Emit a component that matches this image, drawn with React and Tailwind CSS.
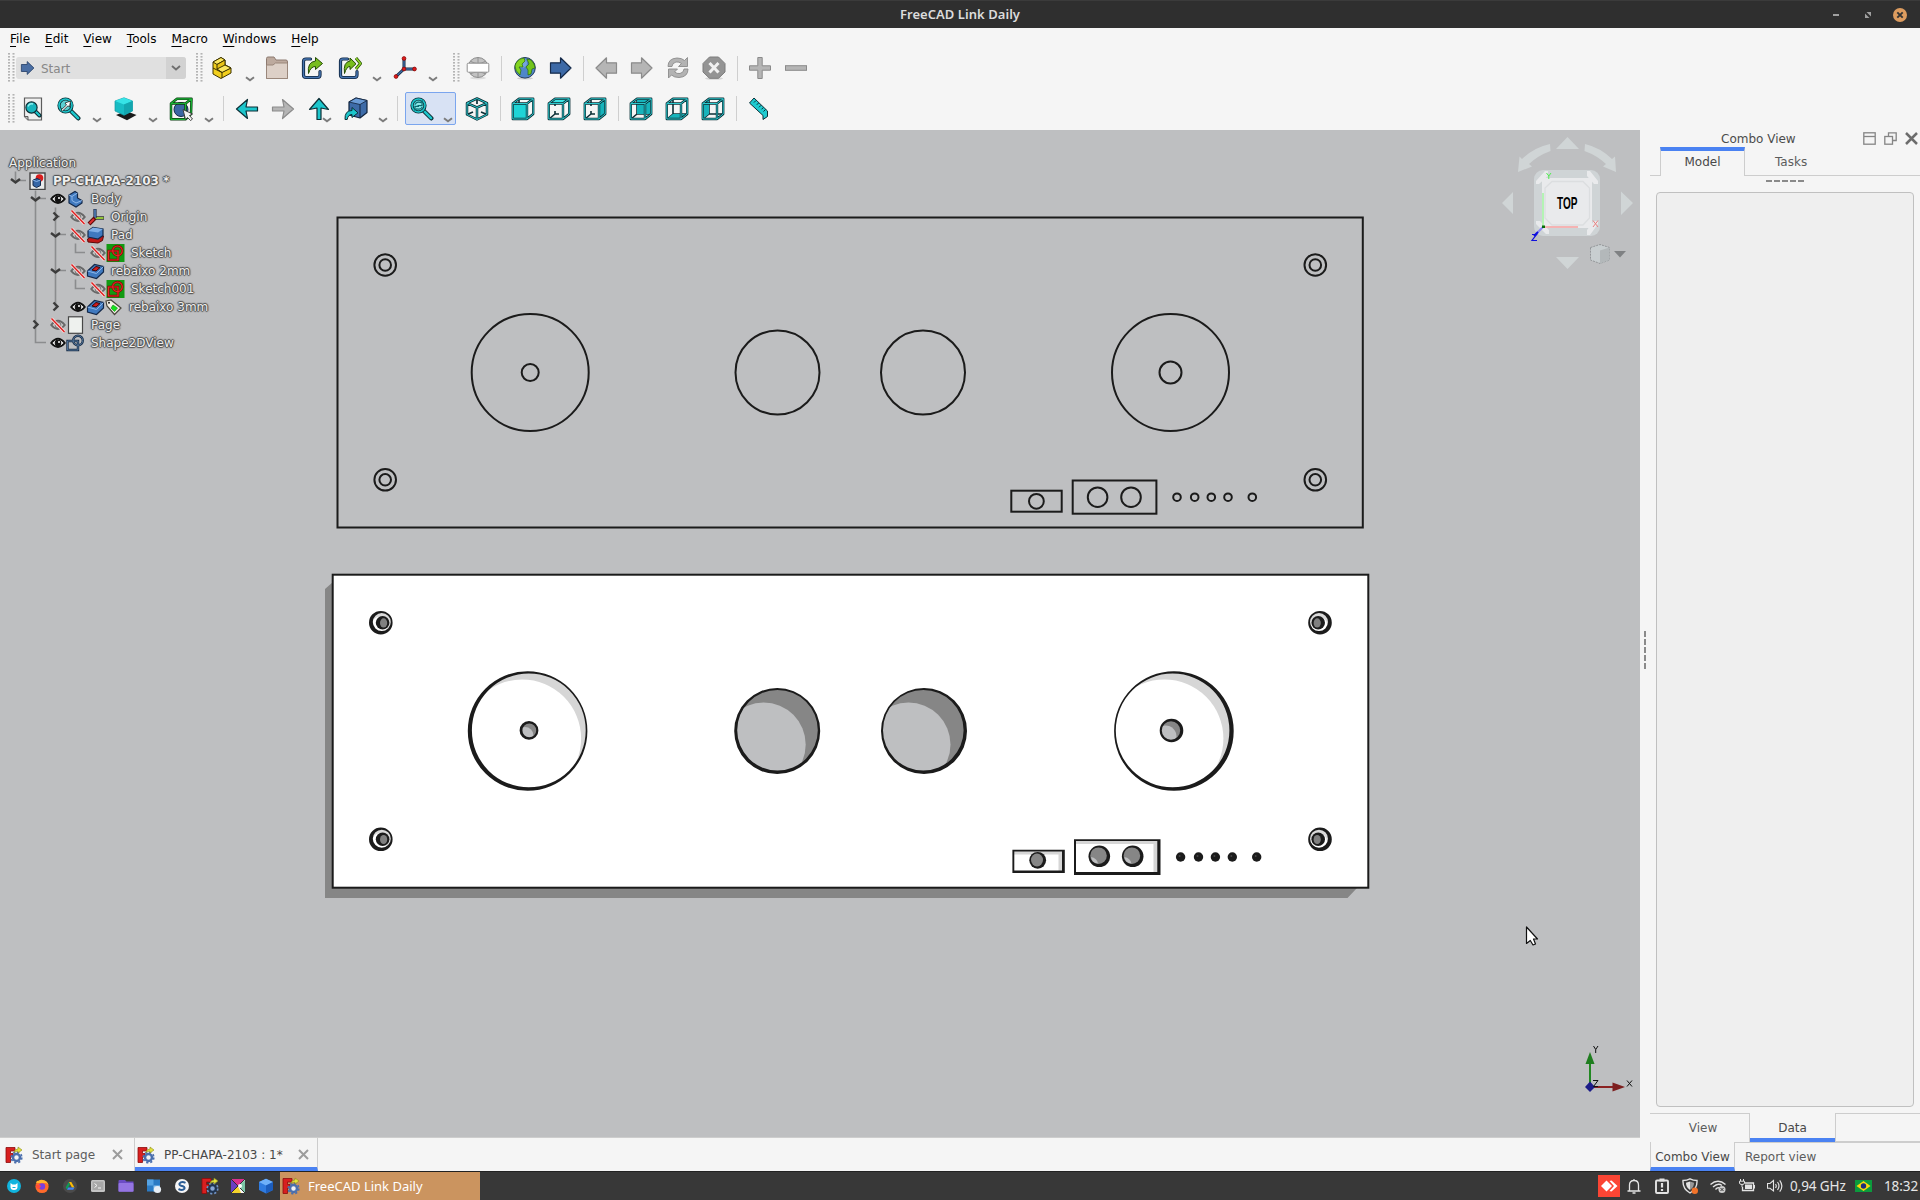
import React from "react";

const INK = "#0c2f36";
const TEAL = "#1cc6cc";
const LINE = "#1b1b1b";

const Svg = ({ s = 24, v = 24, children, className = "" }) => (
  <svg width={s} height={s} viewBox={`0 0 ${v} ${v}`} fill="none" className={"block shrink-0 " + className}>
    {children}
  </svg>
);

/* ---------- toolbar pieces ---------- */
const Grip = () => (
  <svg width="7" height="30" viewBox="0 0 7 30" className="block shrink-0">
    {[0, 4.5].map((x) =>
      [0, 3, 6, 9, 12, 15, 18, 21, 24, 27].map((y) => <rect key={x + "-" + y} x={x} y={y} width="2" height="1.6" fill="#b4b4b4" />)
    )}
  </svg>
);
const Cell = ({ children, className = "w-9" }) => <div className={"flex h-full shrink-0 items-center justify-center " + className}>{children}</div>;
const Chevron = ({ className = "w-[19px]" }) => (
  <div className={"flex h-full shrink-0 items-center justify-center pt-[22px] " + className}>
    <svg width="10" height="6" viewBox="0 0 10 6" fill="none"><path d="M1 1.2 L5 4.2 L9 1.2" stroke="#7c7c7c" strokeWidth="2" /></svg>
  </div>
);
const Sep = () => (
  <div className="flex h-full w-[10px] shrink-0 items-center justify-center"><div className="h-[25px] w-px bg-[#cfcfcf]" /></div>
);

const ArrowShape = ({ fill, stroke, dir = 0, thin }) => (
  <Svg>
    <g transform={`rotate(${dir} 12 12)`}>
      <path
        d={thin ? "M1.5 10 H13 L11.5 2.5 L22.5 12 L11.5 21.5 L13 14 H1.5 Z" : "M1.5 6.8 H11.5 V1.8 L22 12 L11.5 22.2 V17.2 H1.5 Z"}
        fill={fill} stroke={stroke} strokeWidth="1.2" strokeLinejoin="round"
      />
    </g>
  </Svg>
);

const PartIcon = () => (
  <Svg>
    <g stroke="#3d3300" strokeWidth="1" strokeLinejoin="round">
      <path d="M3 6 L11 1.5 L15 4 V9 L21 12 V17 L11 22.5 L3 18 Z" fill="#f2cf1d" />
      <path d="M3 6 L7 8.5 L15 4 L11 1.5 Z" fill="#fbe75e" />
      <path d="M7 8.5 V13 L12 16 L21 12 L15 9 V4 Z" fill="#e8c317" />
      <path d="M7 13 L15 9 L21 12 L12 16.5 Z" fill="#fbe75e" />
      <path d="M3 12 L12 16.5 V22" fill="none" />
    </g>
  </Svg>
);
const FolderIcon = () => (
  <Svg>
    <path d="M1.5 22.5 V2.5 Q1.5 1 3 1 H9 L11 4 H21 Q22.5 4 22.5 6 V22.5 Z" fill="#bdaa9e" stroke="#8d7a70" />
    <path d="M1.5 22.5 V9 H8 L10.5 7 H22.5 V22.5 Z" fill="#ddd0c7" stroke="#9a877b" />
  </Svg>
);
const LinkIcon = ({ double }) => (
  <Svg>
    <path d="M9.5 3 H5 Q2.5 3 2.5 5.500 V19 Q2.5 21.500 5 21.500 H16.500 Q19 21.500 19 19 V15.500" stroke="#0d2440" strokeWidth="3.2" strokeLinecap="round" />
    <path d="M9.5 3 H5 Q2.5 3 2.5 5.500 V19 Q2.5 21.500 5 21.500 H16.500 Q19 21.500 19 19 V15.500" stroke="#4674b0" strokeWidth="1.5" strokeLinecap="round" />
    <path d={double ? "M6.5 17.5 Q5 6 12 5 V2 L18 7.8 L12 13.5 V10.5 Q8.5 10.5 6.5 17.5 Z" : "M7.5 17.5 Q6 6 14.5 5 V1.5 L21.5 7.5 L14.5 13.5 V10.5 Q9.5 10.5 7.5 17.5 Z"} fill="#78bd1f" stroke="#254d05" strokeLinejoin="round" />
    {double && <path d="M18 2 L22.5 7.5 L18 13" stroke="#254d05" strokeWidth="3" />}
    {double && <path d="M18 2 L22.5 7.5 L18 13" stroke="#8ed42b" strokeWidth="1.6" />}
  </Svg>
);
const AxisIcon = () => (
  <Svg>
    <path d="M11 3 V13 H22 M11 13 L3 20.5" stroke="#12273f" strokeWidth="3" />
    <path d="M11 3 V13 H22 M11 13 L3 20.5" stroke="#3f6ea8" strokeWidth="1.4" />
    {[[11, 2.5], [11, 13], [21.5, 13], [3, 20.5]].map(([x, y]) => <circle key={x + "," + y} cx={x} cy={y} r="1.9" fill="#e01b1b" stroke="#7c0606" strokeWidth="0.7" />)}
  </Svg>
);
const GlobeGray = () => (
  <Svg>
    <ellipse cx="12" cy="22" rx="8" ry="1.5" fill="#dcdcdc" />
    <circle cx="12" cy="11.5" r="10" fill="#c2c2c2" stroke="#8d8d8d" />
    <path d="M12 1.5 V21.5 M4 5 Q12 10 20 5 M4 18 Q12 14 20 18" stroke="#8d8d8d" strokeWidth="0.9" />
    <rect x="1.2" y="7.2" width="21.6" height="9" rx="1" fill="#fff" stroke="#929292" />
  </Svg>
);
const Globe = () => (
  <Svg>
    <ellipse cx="12" cy="22.3" rx="8" ry="1.3" fill="#cfcfcf" />
    <circle cx="12" cy="11.8" r="10.3" fill="#4f86c9" stroke="#23395c" />
    <circle cx="9" cy="7" r="5" fill="#8fb8e8" opacity=".6" />
    <path d="M3 7 Q6 2 11 2 L12 5 L9 8 L10 11 L6 11 L8 14 L7 19 Q2 15 2 10 Z" fill="#83d422" stroke="#2c6a0c" strokeWidth=".7" />
    <path d="M14 3 L18 4 Q22 8 22 12 L19 13 L18 18 L15 19 L15 14 L13 11 L16 8 Z" fill="#72c41c" stroke="#2c6a0c" strokeWidth=".7" />
  </Svg>
);
const RefreshIcon = () => (
  <Svg>
    <g fill="#b3b3b3" stroke="#8b8b8b" strokeWidth=".9" strokeLinejoin="round">
      <path d="M2 10.5 Q2 2.5 11 2 Q16 2 18.5 4.5 L21.5 1.5 V10.5 H12.5 L15.5 7.5 Q13 5.5 10 6 Q6 7 6 10.5 Z" />
      <path d="M22 13 Q22 21 13 21.5 Q8 21.5 5.5 19 L2.5 22 V13 H11.5 L8.500 16 Q11 18 14 17.5 Q18 16.5 18 13 Z" />
    </g>
  </Svg>
);
const StopIcon = () => (
  <Svg>
    <ellipse cx="12" cy="22.5" rx="9" ry="1.3" fill="#d5d5d5" />
    <path d="M7.5 1 H16.5 L23 7.5 V16 L16.5 22.3 H7.5 L1 16 V7.5 Z" fill="#949494" stroke="#7d7d7d" />
    <path d="M7.5 7 L16.5 16.5 M16.5 7 L7.5 16.5" stroke="#f1f1f1" strokeWidth="3" />
  </Svg>
);
const PlusIcon = () => (
  <Svg><path d="M9.8 1.5 H14.2 V9.8 H22.5 V14.2 H14.2 V22.5 H9.8 V14.2 H1.5 V9.8 H9.8 Z" fill="#b5b5b5" stroke="#8a8a8a" /></Svg>
);
const MinusIcon = () => <Svg><rect x="1.5" y="9.7" width="21" height="4.6" fill="#b5b5b5" stroke="#8a8a8a" /></Svg>;

const Lens = ({ x = 8.5, y = 8.5, r = 6.5, children }) => (
  <g>
    <path d={`M${x + r * 0.8} ${y + r * 0.8} L21.3 21.3`} stroke={INK} strokeWidth="4.4" strokeLinecap="round" />
    <path d={`M${x + r * 0.9} ${y + r * 0.9} L21.1 21.1`} stroke={TEAL} strokeWidth="2.5" strokeLinecap="round" />
    <circle cx={x} cy={y} r={r} fill="#5ccfd2" stroke={INK} strokeWidth="3.2" />
    <circle cx={x} cy={y} r={r} stroke={TEAL} strokeWidth="1.6" />
    {children}
  </g>
);
const FitAllIcon = () => (
  <Svg>
    <path d="M3.5 1 H20.5 V23 H7 L3.5 19.5 Z" fill="#f0f0f0" stroke="#5b5b5b" strokeWidth="1.2" />
    <path d="M3.5 19.5 H7 V23" fill="#bbb" stroke="#5b5b5b" />
    <path d="M14 14 L18.5 18.5" stroke={INK} strokeWidth="4" strokeLinecap="round" />
    <path d="M14 14 L18.3 18.3" stroke={TEAL} strokeWidth="2" strokeLinecap="round" />
    <circle cx="10.5" cy="10.5" r="5.6" fill="#19b5bd" stroke={INK} strokeWidth="1.2" />
    <path d="M7 9.5 Q8.5 6 12 7" stroke="#8df0f0" strokeWidth="1.4" />
  </Svg>
);
const FitSelIcon = () => (
  <Svg><Lens><path d="M4 13 L9.500 8 L8 6 L13.500 4 L12.500 10 L11 8.800 L5.500 14 Z" fill="#fff" stroke="#222" strokeWidth=".8" /></Lens></Svg>
);
const SyncIcon = () => (
  <Svg><Lens><path d="M5 7.500 Q6.500 4.200 10.500 5.500 L12 4 V8.500 H7.500 M12.300 10 Q10.500 13 6.800 11.800 L5 13 V9.500 H9" stroke="#0b6a70" strokeWidth="1.2" fill="#8ce8e8" /></Lens></Svg>
);
const DrawStyleIcon = () => (
  <Svg>
    <path d="M3 18 L13 14 L23.5 18 L14 23.2 Z" fill="#1a1a1a" />
    <path d="M2 4 L11 0.8 L19.5 4 V14 L11 18.3 L2 14 Z" fill="#18bcc4" stroke="#159aa2" strokeWidth=".7" />
    <path d="M2 4 L11 0.8 L19.5 4 L11 7.5 Z" fill="#36e3e6" />
    <path d="M11 7.5 L19.5 4 V14 L11 18.3 Z" fill="#13a6af" />
  </Svg>
);
const BoxSelIcon = () => (
  <Svg>
    <circle cx="12" cy="12.500" r="7" fill="#3a66a3" stroke="#142a4a" />
    <path d="M2 6.500 L8 1.800 H22.5 L22 17 L16.500 22.300 H2 Z M2 6.500 H16.5 V22 M16.5 6.500 L22.5 1.800" stroke="#0a3a10" strokeWidth="2.500" strokeLinejoin="round" />
    <path d="M2 6.500 L8 1.800 H22.5 L22 17 L16.500 22.300 H2 Z M2 6.500 H16.5 V22 M16.5 6.500 L22.5 1.800" stroke="#19b335" strokeWidth="1.2" strokeLinejoin="round" />
    <path d="M14 12.500 L23.5 17 L20.5 18.5 L23.5 22 L21.5 23.5 L18.5 20.5 L16.5 22.5 Z" fill="#f2f2f2" stroke="#333" strokeWidth=".9" />
  </Svg>
);
const LinkNavIcon = () => (
  <Svg>
    <path d="M5 5 L12 1 L23 3.5 V15.5 L16 21 L5 18 Z" fill="#3d6ba8" stroke="#11233c" strokeWidth="1.2" strokeLinejoin="round" />
    <path d="M5 5 L16 7.500 L23 3.5 L12 1 Z" fill="#6a9bd6" stroke="#11233c" strokeWidth=".8" />
    <path d="M16 7.5 V21" stroke="#11233c" />
    <path d="M1 22.5 Q.5 13.5 8 13.5 V10.5 L14 15.8 L8 20.5 V17.5 Q4 17.5 3.2 22.5 Z" fill={TEAL} stroke={INK} strokeLinejoin="round" />
  </Svg>
);
const FACES = {
  front: "M1.8 6.5 H16 V22 H1.8 Z",
  top: "M1.8 6.5 L8 1.8 H22.2 L16 6.5 Z",
  right: "M16 6.5 L22.2 1.8 V17 L16 22 Z",
  rear: "M8 1.8 H22.2 V17 H8 Z",
  bottom: "M1.8 22 L8 17 H22.2 L16 22 Z",
  left: "M1.8 6.5 L8 1.8 V17 L1.8 22 Z",
};
const CubeIcon = ({ face }) => {
  const back = "M8 2 V9 M8 14 V17 L2 22 M8 17 H12";
  const hidden = "M8 2 V17 M8 17 L2 22 M8 17 H22";
  const front = "M1.8 6.5 H16 V22 H1.8 Z M1.8 6.5 L8 1.8 H22.2 L16 6.5 M22.2 1.8 V17 L16 22";
  const isBehind = face === "rear" || face === "bottom" || face === "left";
  return (
    <Svg>
      <path d={isBehind ? hidden : back} stroke={INK} strokeWidth="1.600" />
      <path d={FACES[face]} fill={face === "top" ? "#3be4e4" : face === "front" ? "#1fd4d6" : "#17b3bb"} />
      <path d={front} stroke={INK} strokeWidth="2.400" strokeLinejoin="round" />
      <path d={front} stroke="#2cc9ce" strokeWidth="1" strokeLinejoin="round" />
    </Svg>
  );
};
const IsoIcon = () => {
  const d = "M12 1.5 L22 6.2 V17.5 L12 22.5 L2 17.5 V6.2 Z M2 6.2 L12 10.5 L22 6.2 M12 10.5 V22.5";
  return (
    <Svg>
      <path d="M12 2 V7 M2 17.5 L8 15 M22 17.5 L16 15" stroke={INK} strokeWidth="1.700" />
      <path d={d} stroke={INK} strokeWidth="2.500" strokeLinejoin="round" />
      <path d={d} stroke="#2cc9ce" strokeWidth="1" strokeLinejoin="round" />
    </Svg>
  );
};
const RulerIcon = () => (
  <Svg>
    <path d="M2.5 6 L7 1 L20.5 14 V19.5 L16 22.5 V18.5 Z" fill="#1fcbd0" stroke={INK} strokeWidth="1" strokeLinejoin="round" />
    <path d="M9 3.5 L7 5.5 M11.5 6 L9.8 7.8 M14 8.3 L12 10.3 M16.3 10.5 L14.6 12.3 M18.5 12.5 L16.5 14.5" stroke={INK} strokeWidth="1" />
  </Svg>
);

const Menu = ({ t }) => <div><span className="underline decoration-1 underline-offset-[3px]">{t[0]}</span>{t.slice(1)}</div>;

/* ---------- model tree ---------- */
const Eye = ({ off }) => (
  <svg width="16" height="16" viewBox="0 0 16 16" fill="none" className="shrink-0">
    <path d="M1.2 8 Q8 -0.5 14.8 8 Q8 16 1.2 8 Z" fill={off ? "#c9c9c9" : "#fff"} stroke={off ? "#686868" : "#111"} strokeWidth="1.9" />
    <circle cx="8" cy="8" r="2.9" fill={off ? "#bcbcbc" : "#111"} stroke={off ? "#777" : "#111"} />
    {!off && <circle cx="9" cy="7" r="1" fill="#fff" />}
    {off && <path d="M1.5 1.500 L14.5 15" stroke="#f6dede" strokeWidth="3.200" />}
    {off && <path d="M1.5 1.500 L14.5 15" stroke="#e01f1f" strokeWidth="1.4" />}
  </svg>
);
const T = ({ children }) => <svg width="19" height="18" viewBox="0 0 19 18" fill="none" className="shrink-0">{children}</svg>;
const treeIcons = {
  doc: <T><rect x="2" y="1" width="15" height="16.5" fill="#e9ebeb" stroke="#444" strokeWidth="1.4" /><circle cx="11.5" cy="6" r="3.8" fill="#d81d1d" /><path d="M5 8 L9 6.5 L12.5 8 V13.5 L8.5 15.5 L5 13.5 Z" fill="#3566a6" stroke="#14294a" /><path d="M5 8 L8.5 9.5 L12.5 8" stroke="#8db6e8" /></T>,
  body: <T><path d="M3 5 L9 1.5 L11.5 3 V8 L16 10.5 V13 L10 17 L3 13 Z" fill="#3f79bf" stroke="#14294a" strokeWidth="1.2" /><path d="M3 5 L6 6.5 L11.5 3 M6 6.5 V10.5 L10 13 L16 10.5" stroke="#8db6e8" /></T>,
  origin: <T><path d="M9 10 H18" stroke="#333" strokeWidth="3.5" /><path d="M9 10 H17.500" stroke="#9ed43c" strokeWidth="1.8" /><path d="M9 10 V1" stroke="#1b2b45" strokeWidth="3.2" /><path d="M9 10 V1.500" stroke="#5b8cca" strokeWidth="1.4" /><path d="M9 10 L3 16" stroke="#5a0909" strokeWidth="4" /><path d="M8 11 L3.5 15.5" stroke="#e03030" strokeWidth="2" /></T>,
  pad: <T><path d="M1.5 13 L6 10 H17.5 L16.500 14.500 L12 17 L2 16 Z" fill="#c01818" stroke="#5a0909" /><path d="M2 5 L7 1.5 L17 3 V9.5 L12 13 L2 11 Z" fill="#3f79bf" stroke="#14294a" strokeWidth="1.2" /><path d="M2 5 L7 1.5 L17 3 L12 6.5 Z" fill="#7eaee6" /></T>,
  sketch: <T><rect x=".5" y="0" width="18" height="18" fill="#129a12" /><path d="M2.500 7 H12 V16 H2.500 Z" stroke="#7a0707" strokeWidth="2.4" /><circle cx="11.5" cy="6.8" r="4.8" stroke="#7a0707" strokeWidth="2.4" /><path d="M2.500 7 H12 V16 H2.500 Z" stroke="#e82626" strokeWidth="1.2" /><circle cx="11.5" cy="6.8" r="4.8" stroke="#e82626" strokeWidth="1.2" /></T>,
  pocket: <T><path d="M1.5 9 L8.5 2.5 L17.5 4.5 V10 L10.5 16.5 L1.5 14 Z" fill="#3f79bf" stroke="#14294a" strokeWidth="1.2" /><path d="M1.5 9 L10.5 11.5 L17.5 4.5" stroke="#8db6e8" /><path d="M6 8 L10 4.5 L14 5.5 L10 9 Z" fill="#d31b1b" stroke="#3c0606" /></T>,
  page: <T><rect x="2.5" y=".8" width="14" height="16.5" fill="#eef1ee" stroke="#474747" strokeWidth="1.2" /></T>,
  shape: <T><path d="M1.5 7 H12 V16 H1.5 Z" stroke="#1a2e48" strokeWidth="2.4" /><circle cx="12" cy="6.5" r="4.8" stroke="#1a2e48" strokeWidth="2.4" /><path d="M1.5 7 H12 V16 H1.5 Z" stroke="#56799f" strokeWidth=".9" /><circle cx="12" cy="6.5" r="4.8" stroke="#56799f" strokeWidth=".9" /></T>,
};
const TagIcon = () => <T><path d="M2 3 L7 2 L17 10 L10.5 16.5 L3 8 Z" fill="#f3f0e6" stroke="#4a463c" strokeWidth="1.2" /><path d="M9 7 L13.5 10 L10.5 13.5 L7 10 Z" fill="#14e31c" stroke="#0a8a10" strokeWidth=".6" /><circle cx="5" cy="4.8" r="1" fill="#222" /></T>;

const ROWS = [
  { pad: "pl-[50px]", icon: "body", eye: "on", t: "Body" },
  { pad: "pl-[70px]", icon: "origin", eye: "off", t: "Origin" },
  { pad: "pl-[70px]", icon: "pad", eye: "off", t: "Pad" },
  { pad: "pl-[90px]", icon: "sketch", eye: "off", t: "Sketch" },
  { pad: "pl-[70px]", icon: "pocket", eye: "off", t: "rebaixo 2mm" },
  { pad: "pl-[90px]", icon: "sketch", eye: "off", t: "Sketch001" },
  { pad: "pl-[70px]", icon: "pocket", eye: "on", t: "rebaixo 3mm", tag: true },
  { pad: "pl-[50px]", icon: "page", eye: "off", t: "Page" },
  { pad: "pl-[50px]", icon: "shape", eye: "on", t: "Shape2DView" },
];
const glow = "[text-shadow:0_0_1px_#444,0_0_2px_#555,1px_0_1px_#555,-1px_0_1px_#555,0_1px_1px_#555,0_-1px_1px_#555]";

const Tree = () => (
  <div className={"absolute left-0 top-[24px] w-[230px] text-[12px] leading-[18px] text-[#eeeeee] " + glow}>
    <svg className="absolute left-0 top-0" width="90" height="198" viewBox="0 153.5 90 198" fill="none">
      <path d="M15.5 171 V180 H26 M35.5 190 V342 H46 M35.5 198 H46 M55.5 207 V306 M75.5 243 V252 H85 M75.5 279 V288 H85 M55.5 216 H60 M55.5 234 H66 M55.5 270 H66" stroke="#8b8c8e" strokeWidth="1.6" />
      {[[15.5, 180], [35.5, 198], [55.5, 234], [55.5, 270]].map(([x, y]) => <path key={x + "" + y} d={`M${x - 4.5} ${y - 1.5} L${x} ${y + 2} L${x + 4.5} ${y - 1.5}`} stroke="#3c3c3c" strokeWidth="2.4" />)}
      {[[55.5, 216], [55.5, 306], [35.5, 324]].map(([x, y]) => <path key={x + "" + y} d={`M${x - 2} ${y - 4} L${x + 2} ${y} L${x - 2} ${y + 4}`} stroke="#3c3c3c" strokeWidth="2.4" />)}
    </svg>
    <div className="relative h-[18px] pl-[9px]">Application</div>
    <div className="relative flex h-[18px] items-center pl-[28px] font-bold">{treeIcons.doc}<span className="pl-[6px]">PP-CHAPA-2103 *</span></div>
    {ROWS.map((r) => (
      <div key={r.t} className={"relative flex h-[18px] items-center whitespace-nowrap " + r.pad}>
        <Eye off={r.eye === "off"} /><span>{treeIcons[r.icon]}</span>{r.tag && <span className="-ml-[1px]"><TagIcon /></span>}
        <span className={r.tag ? "pl-[6px]" : "pl-[6px]"}>{r.t}</span>
      </div>
    ))}
  </div>
);

/* ---------- 3D scene ---------- */
const Crescent = ({ id, cx, cy, r, dx, dy, r2, back, fore }) => (
  <g>
    <clipPath id={id}><circle cx={cx} cy={cy} r={r} /></clipPath>
    <circle cx={cx} cy={cy} r={r} fill={back} />
    <circle cx={cx + dx} cy={cy + dy} r={r2} fill={fore} clipPath={`url(#${id})`} />
  </g>
);
const Rim = ({ cx, cy, r, dx = 0, dy = 0, w = 2 }) => (
  <path
    fillRule="evenodd" fill={LINE}
    d={`M${cx - r - 1} ${cy} a${r + 1} ${r + 1} 0 1 0 ${2 * r + 2} 0 a${r + 1} ${r + 1} 0 1 0 ${-2 * r - 2} 0 Z M${cx + dx - (r + 1 - w)} ${cy + dy} a${r + 1 - w} ${r + 1 - w} 0 1 0 ${2 * (r + 1 - w)} 0 a${r + 1 - w} ${r + 1 - w} 0 1 0 ${-2 * (r + 1 - w)} 0 Z`}
  />
);

const Scene = () => (
  <svg width="1640" height="1007" viewBox="0 130 1640 1007" fill="none" className="block">
    <g stroke={LINE} strokeWidth="2">
      <rect x="337.5" y="217.5" width="1025.3" height="310" />
      {[[385.200, 265], [1315.3, 265], [385.200, 479.8], [1315.3, 479.8]].map(([x, y]) => <g key={x + "-" + y}><circle cx={x} cy={y} r="10.8" /><circle cx={x} cy={y} r="5.8" /></g>)}
      <circle cx="530.200" cy="372.5" r="58.5" /><circle cx="530.200" cy="372.5" r="8.5" />
      <circle cx="777.5" cy="372.5" r="42" /><circle cx="923" cy="372.5" r="42" />
      <circle cx="1170.5" cy="372.5" r="58.5" /><circle cx="1170.5" cy="372.5" r="11" />
      <rect x="1011.3" y="490.7" width="50.4" height="21" /><circle cx="1036.4" cy="501.3" r="7.4" />
      <rect x="1072.7" y="480.5" width="83.700" height="33.2" /><circle cx="1097.6" cy="497.2" r="9.8" /><circle cx="1131" cy="497.2" r="9.8" />
      {[1177, 1194.7, 1211.3, 1228, 1252.3].map((x) => <circle key={x} cx={x} cy="497.2" r="3.8" />)}
    </g>

    <path d="M333 582 L325 589 V898 H1347.5 L1357 888 V700 H333 Z" fill="#868686" />
    <rect x="332.7" y="574.7" width="1035.6" height="313" fill="#fff" stroke={LINE} strokeWidth="2" />
    {[[380.8, 622.7, 1], [380.8, 839.3, 1], [1320, 622.7, -1], [1320, 839.3, -1]].map(([x, y, d]) => (
      <g key={x + "-" + y}>
        <circle cx={x} cy={y} r="10.8" fill="#dadada" /><circle cx={x - 1} cy={y + 2} r="8" fill="#fff" />
        <Rim cx={x} cy={y} r={10.8} w={2.8} dx={d * 1} dy={-0.6} />
        <circle cx={x + d * 1.8} cy={y} r="6.8" fill={LINE} /><ellipse cx={x + d * 2.8} cy={y + 0.2} rx="3.6" ry="4.6" fill="#808080" />
      </g>
    ))}
    <Crescent id="c1" cx={527.6} cy={731} r={59} dx={-5.5} dy={7.5} r2={59} back="#d6d6d6" fore="#fff" />
    <Rim cx={527.6} cy={731} r={58.8} w={2.9} dx={1.2} dy={-0.6} />
    <Crescent id="c2" cx={529} cy={730.4} r={8.5} dx={-4} dy={5} r2={8.5} back="#868686" fore="#bebfc1" />
    <Rim cx={529} cy={730.4} r={8.4} w={2.5} dx={0.3} />
    <Crescent id="c3" cx={777.2} cy={731} r={42} dx={-13.5} dy={13.5} r2={42} back="#868686" fore="#bebfc1" />
    <Rim cx={777.2} cy={731} r={42} w={2.7} dx={0.3} dy={-0.8} />
    <Crescent id="c4" cx={924} cy={731} r={42} dx={-15.5} dy={13.5} r2={42} back="#868686" fore="#bebfc1" />
    <Rim cx={924} cy={731} r={42} w={2.7} dx={-0.7} dy={-0.8} />
    <Crescent id="c5" cx={1173.9} cy={731} r={59} dx={-9.5} dy={7.5} r2={59} back="#d6d6d6" fore="#fff" />
    <Rim cx={1173.9} cy={731} r={58.8} w={3} dx={-1.3} dy={-0.6} />
    <Crescent id="c6" cx={1171.5} cy={730.5} r={11} dx={-6} dy={6} r2={11} back="#868686" fore="#bebfc1" />
    <Rim cx={1171.5} cy={730.5} r={10.8} w={2.6} dx={-0.5} />

    <rect x="1013" y="850.5" width="51" height="21.5" fill="#fff" />
    <path d="M1014 851 H1063 V871 H1058.5 V854.5 H1014 Z" fill="#d6d6d6" />
    <path fillRule="evenodd" fill={LINE} d="M1012.4 849.7 H1064.8 V873 H1012.4 Z M1014.3 851.4 V870.6 H1062 V851.4 Z" />
    <circle cx="1037.7" cy="860.3" r="8.4" fill={LINE} /><ellipse cx="1037" cy="860" rx="6" ry="6.4" fill="#868686" />
    <rect x="1075" y="840" width="85" height="34" fill="#fff" />
    <path d="M1075 840 H1158 V872 H1153.5 V844 H1075 Z" fill="#d6d6d6" />
    <path fillRule="evenodd" fill={LINE} d="M1074 839.2 H1160.5 V875 H1074 Z M1076 841 V872 H1157.3 V841 Z" />
    {[1099.3, 1132.7].map((x) => (
      <g key={x}><circle cx={x} cy="856.3" r="10.8" fill={LINE} /><circle cx={x - 0.8} cy="855.7" r="8.3" fill="#868686" /><path d={`M${x - 8.3} 857 q6 1 7 6.500 q-6 -.5 -7 -6.500`} fill="#bebfc1" /></g>
    ))}
    {[1180.6, 1198.5, 1215.4, 1232.3, 1256.7].map((x) => <g key={x}><circle cx={x} cy="857" r="4.7" fill={LINE} /><circle cx={x - 1} cy="856" r="1" fill="#444" /></g>)}

    {/* navigation cube */}
    <g fill="#d0d5d6">
      <path d="M1567.5 137 L1579 149 H1556 Z M1567.5 269 L1579 257 H1556 Z M1502 203 L1513 192 V214 Z M1633 203 L1621 191.5 V215 Z" />
      <path d="M1550 144 L1550.5 151 Q1538 155.5 1529 164 L1532 166.5 L1518 172 L1519.5 156.5 L1522 159 Q1534 147.5 1550 144 Z" />
      <path d="M1585 144 L1584.5 151 Q1597 155.5 1606 164 L1603 166.5 L1616 172 L1615 156.5 L1612 159 Q1600 147.5 1585 144 Z" />
      <rect x="1534" y="170" width="66" height="66" rx="9" fill="#cfd4d6" />
    </g>
    <path d="M1536 181 L1545 171 H1548 V176 L1539 184 H1536 Z M1598 181 L1590 171 H1587 V176 L1594 184 H1598 Z M1536 224 L1546 234 H1549 V230 L1540 221 H1536 Z M1598 224 L1590 235 H1587 V230 L1594 221 H1598 Z" fill="#e9eaec" />
    <rect x="1542" y="178" width="50" height="50" rx="2" fill="#e9eaec" />
    <path d="M1552 181.5 H1583 L1589.5 188 V218 L1583 225 H1552 L1545 218 V188 Z" stroke="#dcdee0" strokeWidth="1.3" />
    <path d="M1543 193 V227" stroke="#b4f3b4" strokeWidth="2" /><path d="M1544 227 H1578" stroke="#f5b3b3" strokeWidth="2" />
    <path d="M1543 227 L1535 235" stroke="#8888f2" strokeWidth="2" /><path d="M1538 232 L1534 236" stroke="#1010dd" strokeWidth="2" />
    <rect x="1542" y="225.500" width="3" height="2.500" fill="#066b0c" />
    <path d="M1546.500 173 L1548.800 176 L1551 173 M1548.800 176 V179" stroke="#4fee4f" />
    <path d="M1593 220.500 L1598 227 M1598 220.500 L1593 227" stroke="#ea8080" />
    <path d="M1532 234.500 H1536.500 L1532 240.500 H1537" stroke="#1010dd" strokeWidth="1.2" />
    <text x="1557" y="209" textLength="20.500" lengthAdjust="spacingAndGlyphs" fontFamily="Liberation Sans" fontWeight="700" fontSize="16.500" fill="#000">TOP</text>
    <path d="M1590.500 247.500 L1600 244.500 L1609.500 247.500 V260 L1600 263.500 L1590.500 260 Z" fill="#c8ced0" stroke="#8d9193" strokeWidth=".9" strokeDasharray="2 1" />
    <path d="M1600 250.500 L1609.500 247.500 V260 L1600 263.500 Z" fill="#b3b8ba" />
    <path d="M1614 251 H1626 L1620 257.500 Z" fill="#7f8183" />

    {/* axis cross */}
    <path d="M1590 1087 V1062" stroke="#228822" strokeWidth="2" /><path d="M1590 1052 L1594.500 1064 H1585.500 Z" fill="#1f7d1f" />
    <path d="M1590 1087 H1614" stroke="#8b2222" strokeWidth="2" /><path d="M1625 1087 L1612.500 1082.500 V1091.500 Z" fill="#7d1f1f" />
    <path d="M1590 1081.500 L1595 1087 L1590 1092 L1585 1087 Z" fill="#1c1c88" />
    <path d="M1593.500 1046 L1595.700 1049.500 L1598 1046 M1595.700 1049.500 V1053 M1593 1080.500 H1598 L1593.500 1086.500 H1598 M1627 1080.500 L1632 1086.500 M1632 1080.500 L1627 1086.500" stroke="#111" />
    {/* pointer */}
    <path d="M1526.500 927 V943.500 L1530.300 940.500 L1533 945 L1535.500 944 L1533.500 939 H1537.500 Z" fill="#fff" stroke="#111" strokeWidth="1.200" strokeLinejoin="round" />
  </svg>
);

/* ---------- application logos ---------- */
const FreeCad = ({ dark }) => (
  <Svg s={18} v={18}>
    <path d="M1 1.500 H10 V5 H5.500 V7.500 H8 V11 H5.500 V16.500 H1 Z" fill="#d81f1f" stroke="#8c0c0c" strokeWidth=".8" />
    <circle cx="11.500" cy="11.500" r="3.500" stroke={dark ? "#1f3350" : "#4a6fae"} strokeWidth="2.500" fill={dark ? "#88a6d4" : "#f2f2f2"} />
    <circle cx="11.500" cy="11.500" r="5.300" stroke={dark ? "#6f93c8" : "#4a6fae"} strokeWidth="1.600" strokeDasharray="2.160 2" />
    <path d="M9 6.500 Q9.500 3 13 3 V1 L17 4 L13 7 V5.200 Q11 5 9 6.500 Z" fill="#e3e23c" stroke="#8a8a1c" strokeWidth=".6" />
  </Svg>
);
const TabClose = () => <svg width="11" height="11" viewBox="0 0 11 11"><path d="M1 1 L10 10 M10 1 L1 10" stroke="#9c9c9c" strokeWidth="2" /></svg>;

const S = ({ children }) => <div className="flex w-7 shrink-0 items-center justify-center"><Svg s={16} v={16}>{children}</Svg></div>;
const Launchers = () => (
  <>
    <S><circle cx="8" cy="8" r="7" fill="#11b4de" /><path d="M4.500 5 L6.500 6.500 H9.500 L11.500 5 V9 Q11.500 12 8 12 Q4.500 12 4.500 9 Z" fill="#fff" /><path d="M6.500 9.500 H9.500" stroke="#11b4de" /></S>
    <S><circle cx="8" cy="8.500" r="6.600" fill="#ff6a2b" /><path d="M2 5 Q3 2 4 3 Q7 1 9 2 Q14 3 14.600 8 Q14 5 11 5 Z" fill="#ffb52e" /><circle cx="8" cy="8.500" r="3.200" fill="#7a3fe0" /><path d="M2 7 Q5 6 7 8 L5 11 Q2 11 2 7 Z" fill="#ff4b3a" /></S>
    <S><circle cx="8" cy="8" r="7" fill="#4a4a4a" /><path d="M6.800 4 H9.300 L12.500 9.500 H10 Z" fill="#fbbc05" /><path d="M6.800 4 L8 6.200 L5 11.500 L3.600 9.500 Z" fill="#0f9d58" /><path d="M6.200 9.500 H12.500 L11.200 11.700 H5 Z" fill="#4285f4" /></S>
    <S><rect x="1" y="2" width="14" height="12" rx="1.500" fill="#c4c4c4" /><rect x="2.500" y="3.500" width="11" height="8.500" fill="#a8a8a8" /><path d="M4.500 5.500 L7 7.500 L4.500 9.500 M8 10 H11" stroke="#f4f4f4" /></S>
    <S><path d="M0.500 3 Q.5 2 1.500 2 H7 L8.500 3.500 H15.500 V13.500 H.5 Z" fill="#6b4cc4" /><rect x=".5" y="5" width="15" height="8.700" rx="1" fill="#9575e2" /></S>
    <S><rect x="1" y="1.500" width="13" height="12" fill="#2b7bc4" /><rect x="1" y="1.500" width="6.500" height="6" fill="#56a3e3" /><rect x="7.500" y="7.500" width="6.500" height="6" fill="#8dc3ee" /><circle cx="11.500" cy="11.500" r="3.600" fill="#e8eef5" /></S>
    <S><circle cx="8" cy="8" r="7" fill="#f6f6f6" /><path d="M11.500 4.800 Q7.500 2.800 5.500 5.500 Q5 7.500 8 8 Q11 8.800 10.500 10.600 Q8.500 13.200 4.500 11" stroke="#2c5d94" strokeWidth="2" /></S>
    <div className="flex w-7 shrink-0 items-center justify-center"><FreeCad dark /></div>
    <S><rect x="1" y="1" width="14" height="14" fill="#f8f8f8" /><path d="M1 1 H15 L8 8 Z" fill="#d9308c" /><path d="M1 1 L8 8 L1 15 Z" fill="#6a3fc2" /><path d="M1 15 L8 8 L11 15 Z" fill="#f4d22c" /><path d="M15 2 L8 8 L15 15 Z" fill="#7cc6a8" /><path d="M1 1 L15 15 M15 1 L1 15" stroke="#222" strokeWidth=".9" /><circle cx="10" cy="8" r="2" fill="#fff" /></S>
    <S><path d="M8 .8 L15 4 V12 L8 15.500 L1 12 V4 Z" fill="#2f7be0" /><path d="M8 .8 L15 4 L8 7.500 L1 4 Z" fill="#6eb0fa" /><path d="M8 7.500 L15 4 V12 L8 15.500 Z" fill="#1c5dbd" /></S>
  </>
);

const G = "#e3e3e3";
const Tray = () => (
  <div className="ml-auto flex h-full items-center text-[13.5px] tracking-[-0.1px] text-[#e6e6e6]">
    <div className="flex h-[22px] w-[22px] items-center justify-center bg-[#fb4534]">
      <svg width="17" height="12" viewBox="0 0 17 12"><path d="M0 6 L5.500 .5 L11 6 L5.500 11.500 Z" fill="#fff" /><path d="M8.500 1 L10.500 .5 L16.500 6 L10.500 11.500 L8.500 11 L13 6 Z" fill="#fff" /></svg>
    </div>
    <S><path d="M1.500 13 H14.500 M3.500 12.500 V7 Q3.500 2.500 8 2.500 Q12.500 2.500 12.500 7 V12.500 M8 2.500 V1 M6.500 15 H9.500" stroke={G} strokeWidth="1.300" /></S>
    <S><rect x="2" y="2.500" width="12" height="12.500" rx="1" stroke={G} strokeWidth="1.900" /><rect x="5.500" y=".5" width="5" height="3" fill={G} /><path d="M8 5 V9.500 M8 11 V13" stroke={G} strokeWidth="2.200" /></S>
    <S><path d="M1 2.500 Q5 2.500 8 .8 Q11 2.500 15 2.500 Q15.500 11 8 15 Q.5 11 1 2.500 Z" stroke={G} strokeWidth="1.400" /><path d="M4 4.800 L8 3.500 V12 Q4 9.500 4 4.800 Z" fill={G} /><path d="M8 3.500 L12 4.800 Q12 9.500 8 12 Z" fill="#999" /><circle cx="12.800" cy="12.800" r="3.200" fill="#f37329" /></S>
    <S><path d="M.5 6.500 Q8 0 15.500 6.500 M3 9 Q8 4.500 12 7.500 M5.500 11.500 Q7.500 9.300 9 10" stroke={G} strokeWidth="1.400" /><circle cx="12" cy="11.500" r="3.500" fill="#cfcfcf" /><path d="M10.500 10 L13.500 13 M13.500 10 L10.500 13" stroke="#383838" /></S>
    <div className="w-[1px]" />
    <S><path d="M6 5 H14.500 V12.500 H3.500 V9" stroke={G} strokeWidth="1.300" /><rect x="6" y="6.500" width="7" height="4.500" fill={G} /><rect x="14.800" y="7" width="1.200" height="3.500" fill={G} /><path d="M1.500 1 V3 M4.500 1 V3 M.5 3.200 H5.500 V5 Q5.500 6.500 3 6.500 Q.5 6.500 .5 5 Z M3 6.500 V9" stroke={G} /></S>
    <S><path d="M.5 5.500 H3 L6.500 2.500 V13 L3 10.300 H.5 Z" stroke={G} strokeWidth="1.100" /><path d="M8.500 6 Q10 8 8.500 10 M10.500 4 Q13.500 8 10.500 12 M12.700 2.300 Q17 8 12.700 13.700" stroke={G} strokeWidth="1.200" /></S>
    <div className="w-[66px] whitespace-nowrap pl-[1px] pt-[1px]">0,94 GHz</div>
    <svg width="17" height="12" viewBox="0 0 17 12" className="mr-[12px]"><rect width="17" height="12" fill="#0b9a3d" /><path d="M8.500 1 L15.500 6 L8.500 11 L1.500 6 Z" fill="#f8d80e" /><circle cx="8.500" cy="6" r="2.700" fill="#1b2d7a" /></svg>
    <div className="w-[36px] whitespace-nowrap pt-[1px]">18:32</div>
  </div>
);

const UpArrow = () => (
  <div className="relative flex w-9 items-center justify-center">
    <ArrowShape thin fill={TEAL} stroke={INK} dir={-90} />
    <svg width="10" height="6" viewBox="0 0 10 6" fill="none" className="absolute left-[21px] top-[20px]"><path d="M1 1.200 L5 4.200 L9 1.200" stroke="#7c7c7c" strokeWidth="2" /></svg>
  </div>
);

export default function App() {
  return (
    <div className="flex h-[1200px] w-[1920px] flex-col overflow-hidden bg-[#f5f5f5] font-['DejaVu_Sans',sans-serif] text-[12px] text-black">
      <header className="grid h-7 shrink-0 grid-cols-3 items-center border-t border-[#3b3b3b] bg-[#2f2f2f]">
        <div />
        <div className="text-center font-['Noto_Sans',sans-serif] text-[13px] font-semibold tracking-[0.05px] text-[#dcdcdc]">FreeCAD Link Daily</div>
        <div className="flex items-center justify-end pr-[13px]">
          <div className="mr-[26px] h-[2px] w-[6px] bg-[#a0a0a0]" />
          <svg width="6" height="6" viewBox="0 0 6 6" className="mr-[22px]"><path d="M1.500 0 H6 V4.500 Z M0 1.500 L4.500 6 H0 Z" fill="#a0a0a0" /></svg>
          <svg width="14" height="14" viewBox="0 0 14 14"><circle cx="7" cy="7" r="7" fill="#dd9c5f" /><path d="M4.300 4.300 L9.700 9.700 M9.700 4.300 L4.300 9.700" stroke="#333" strokeWidth="1.900" /></svg>
        </div>
      </header>

      <nav className="flex h-[19px] shrink-0 items-center gap-[15px] pl-[10px] pt-[3px]">
        {["File", "Edit", "View", "Tools", "Macro", "Windows", "Help"].map((m) => <Menu key={m} t={m} />)}
      </nav>

      <div className="flex h-[42px] shrink-0 items-center pl-2">
        <Grip />
        <div className="ml-[1px] flex h-[22px] w-[170px] items-center overflow-hidden rounded-[3px] bg-[#e0e0e0]">
          <svg width="15" height="14" viewBox="0 0 24 24" className="ml-1"><path d="M1.500 6 H11.500 V1 L23 12 L11.500 23 V18 H1.500 Z" fill="#4a6ea3" stroke="#2c456c" strokeWidth="1.500" /></svg>
          <span className="ml-[6px] flex-1 pt-[1px] text-[#888]">Start</span>
          <div className="flex h-full w-5 items-center justify-center bg-[#d2d2d2]"><svg width="10" height="6" viewBox="0 0 10 6" fill="none"><path d="M1 1 L5 4.500 L9 1" stroke="#6f6f6f" strokeWidth="1.900" /></svg></div>
        </div>
        <div className="ml-[10px]"><Grip /></div>
        <div className="w-[1px]" />
        <Cell><PartIcon /></Cell><Chevron />
        <Cell><FolderIcon /></Cell>
        <Cell className="w-[36px]"><LinkIcon /></Cell>
        <div className="w-[1px]" />
        <Cell><LinkIcon double /></Cell><Chevron className="w-[18px]" />
        <Cell className="w-[38px]"><AxisIcon /></Cell><Chevron className="w-[18px]" />
        <div className="ml-[11px]"><Grip /></div>
        <Cell><GlobeGray /></Cell><Sep />
        <Cell className="w-[37px]"><Globe /></Cell>
        <Cell className="w-[35px]"><ArrowShape fill="#3c69a6" stroke="#152a4a" /></Cell><Sep />
        <Cell><ArrowShape fill="#b5b5b5" stroke="#8b8b8b" dir={180} /></Cell>
        <Cell><ArrowShape fill="#b5b5b5" stroke="#8b8b8b" /></Cell>
        <Cell><RefreshIcon /></Cell>
        <Cell><StopIcon /></Cell><Sep />
        <Cell><PlusIcon /></Cell>
        <Cell><MinusIcon /></Cell>
      </div>

      <div className="flex h-[41px] shrink-0 items-center pb-[2px] pl-2">
        <Grip />
        <Cell><FitAllIcon /></Cell>
        <Cell className="w-[36px]"><FitSelIcon /></Cell><Chevron />
        <Cell className="w-[37px]"><DrawStyleIcon /></Cell><Chevron />
        <Cell className="w-[37px]"><BoxSelIcon /></Cell><Chevron />
        <Sep />
        <div className="w-[1px]" />
        <Cell><ArrowShape thin fill={TEAL} stroke={INK} dir={180} /></Cell>
        <Cell><ArrowShape thin fill="#b5b5b5" stroke="#8b8b8b" /></Cell>
        <UpArrow />
        <Cell className="w-[37px]"><LinkNavIcon /></Cell><Chevron className="w-[18px]" />
        <Sep />
        <div className="ml-[3px] flex h-[33px] w-[51px] items-center rounded-[2px] border border-[#7aa5ee] bg-[#d8e2f4]">
          <div className="w-[30px] pl-[4px]"><SyncIcon /></div>
          <div className="ml-[7px] pt-[22px]"><svg width="10" height="6" viewBox="0 0 10 6" fill="none"><path d="M1 1.200 L5 4.200 L9 1.200" stroke="#7c7c7c" strokeWidth="2" /></svg></div>
        </div>
        <div className="w-[3px]" />
        <Cell><IsoIcon /></Cell><Sep />
        <Cell><CubeIcon face="front" /></Cell>
        <Cell><CubeIcon face="top" /></Cell>
        <Cell><CubeIcon face="right" /></Cell><Sep />
        <Cell><CubeIcon face="rear" /></Cell>
        <Cell><CubeIcon face="bottom" /></Cell>
        <Cell><CubeIcon face="left" /></Cell><Sep />
        <Cell><RulerIcon /></Cell>
      </div>

      <div className="flex h-[1041px] shrink-0">
        <main className="flex w-[1640px] shrink-0 flex-col">
          <div className="relative h-[1007px] bg-[#bebfc1]"><Scene /><Tree /></div>
          <div className="flex h-[34px] border-t border-[#cdcdcd] text-[#5c5c5c]">
            <div className="flex w-[135px] items-center border-r border-[#cdcdcd] pl-[5px]">
              <FreeCad /><span className="flex-1 pl-[9px]">Start page</span><div className="pr-[11px]"><TabClose /></div>
            </div>
            <div className="flex w-[183px] items-center border-b-4 border-r border-b-[#4a82f2] border-r-[#cdcdcd] pl-[2px] pt-[4px] text-[#484848]">
              <FreeCad /><span className="flex-1 pl-[9px]">PP-CHAPA-2103 : 1*</span><div className="pr-[8px]"><TabClose /></div>
            </div>
          </div>
        </main>
        <div className="flex w-[10px] shrink-0 flex-col items-center justify-center gap-[2px] pb-[1px]">
          {[0, 1, 2, 3, 4].map((i) => <div key={i} className="h-[6px] w-[2px] bg-[#8a8a8a]" />)}
        </div>
        <aside className="flex w-[270px] shrink-0 flex-col text-[#5c5c5c]">
          <div className="flex h-[17px] items-center">
            <div className="flex-1 pl-[71px] text-[#4c4c4c]">Combo View</div>
            <div className="flex items-center gap-2 pr-[2px]">
              <svg width="13" height="13" viewBox="0 0 13 13" fill="none"><rect x=".8" y=".8" width="11.400" height="11.400" stroke="#858585" strokeWidth="1.300" /><path d="M1 4.500 H12" stroke="#858585" strokeWidth="1.300" /></svg>
              <svg width="13" height="13" viewBox="0 0 13 13" fill="none"><path d="M4.500 4 V.8 H12.200 V8.500 H9" stroke="#858585" strokeWidth="1.300" /><rect x=".8" y="4.500" width="7.700" height="7.700" stroke="#858585" strokeWidth="1.300" /></svg>
              <svg width="13" height="13" viewBox="0 0 13 13"><path d="M1 1 L12 12 M12 1 L1 12" stroke="#6c6c6c" strokeWidth="2.500" /></svg>
            </div>
          </div>
          <div className="flex h-[29px]">
            <div className="w-[10px] border-b border-[#cdcdcd]" />
            <div className="flex w-[85px] items-center justify-center border-x border-t-4 border-x-[#cdcdcd] border-t-[#4a82f2] pb-[3px] text-[#484848]">Model</div>
            <div className="flex flex-1 items-center border-b border-[#cdcdcd] pl-[30px] pt-[2px]">Tasks</div>
          </div>
          <div className="flex h-[16px] items-center justify-center gap-[2px] pb-[7px]">
            {[0, 1, 2, 3, 4].map((i) => <div key={i} className="h-[2px] w-[6px] bg-[#8a8a8a]" />)}
          </div>
          <div className="ml-[6px] h-[915px] w-[258px] rounded-[4px] border border-[#c0c0c0] bg-[#efefef]" />
          <div className="mt-[6px] flex h-[29px] shrink-0">
            <div className="flex w-[100px] items-center justify-center border-r border-t border-[#cdcdcd] pl-[7px]">View</div>
            <div className="flex w-[85px] items-center justify-center border-b-4 border-[#4a82f2] pt-[4px] text-[#484848]">Data</div>
            <div className="flex-1 border-b border-l border-t border-[#cdcdcd]" />
          </div>
          <div className="flex h-[29px] shrink-0">
            <div className="flex w-[85px] items-center justify-center border-b-4 border-l border-r border-b-[#4a82f2] border-x-[#cdcdcd] pt-[4px] text-[#484848]">Combo View</div>
            <div className="flex flex-1 items-center border-t border-[#cdcdcd] pl-[10px]">Report view</div>
          </div>
        </aside>
      </div>

      <footer className="flex h-[29px] shrink-0 items-center border-t border-[#222] bg-[#383838] font-['Noto_Sans',sans-serif]">
        <Launchers />
        <div className="flex h-full w-[200px] items-center bg-[#cb945f] pl-[2px] text-[13px] text-white"><FreeCad /><span className="pl-[8px] pt-[1px]">FreeCAD Link Daily</span></div>
        <Tray />
      </footer>
    </div>
  );
}
